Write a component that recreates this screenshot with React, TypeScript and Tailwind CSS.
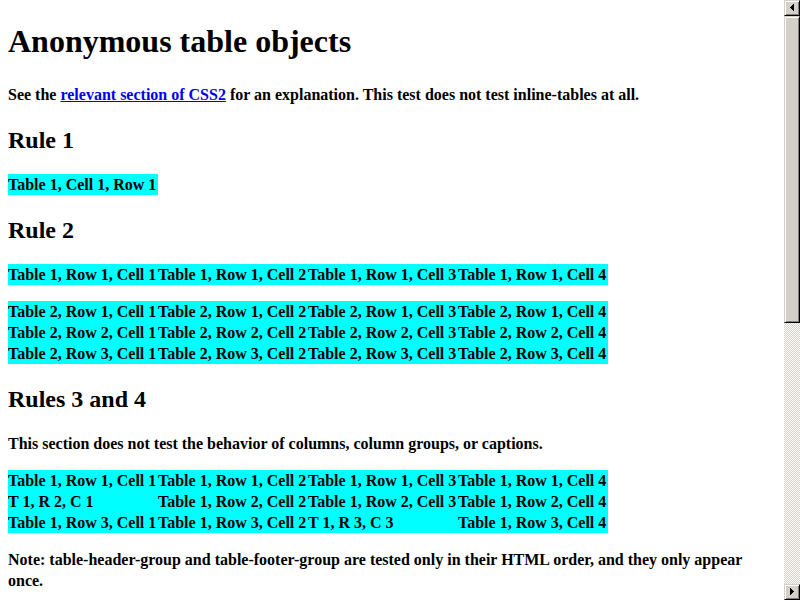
import React from "react";

const COLUMNS = [1, 2, 3, 4];

function fullRow(table: number, row: number): string[] {
  return COLUMNS.map((cell) => `Table ${table}, Row ${row}, Cell ${cell}`);
}

const ruleTwoFirst = [fullRow(1, 1)];
const ruleTwoSecond = [fullRow(2, 1), fullRow(2, 2), fullRow(2, 3)];
const ruleThree = [
  fullRow(1, 1),
  ["T 1, R 2, C 1", ...fullRow(1, 2).slice(1)],
  [...fullRow(1, 3).slice(0, 2), "T 1, R 3, C 3", "Table 1, Row 3, Cell 4"],
];

function DataTable({ rows }: { rows: string[][] }) {
  return (
    <table className="mb-4 border-collapse bg-[#00ffff]">
      <tbody>
        {rows.map((cells, r) => (
          <tr key={r}>
            {cells.map((text, c) => (
              <td key={c} className="w-[150px] p-0 whitespace-nowrap">
                {text}
              </td>
            ))}
          </tr>
        ))}
      </tbody>
    </table>
  );
}

function Heading({ children }: { children: React.ReactNode }) {
  return <h2 className="mt-5 mb-[18px] text-2xl leading-[31px]">{children}</h2>;
}

const raised =
  "border border-t-[#d4d0c8] border-l-[#d4d0c8] border-r-black border-b-black bg-[#d4d0c8] shadow-[inset_1px_1px_0_#ffffff,inset_-1px_-1px_0_#808080]";

function ArrowButton({ label, path }: { label: string; path: string }) {
  return (
    <button type="button" aria-label={label} className={`size-4 shrink-0 ${raised}`}>
      <svg viewBox="0 0 14 14" className="block size-full" shapeRendering="crispEdges">
        <path d={path} fill="#000000" />
      </svg>
    </button>
  );
}

function ScrollBar() {
  return (
    <div className="flex w-4 shrink-0 flex-col bg-[repeating-conic-gradient(#d4d0c8_0_25%,#ffffff_0_50%)] bg-size-[2px_2px]">
      <ArrowButton
        label="Scroll up"
        path="M5 6h1v1h-1zM6 5h1v3h-1zM7 4h1v5h-1zM8 3h1v7h-1z"
      />
      <div className="flex-1">
        <div className={`h-[54%] ${raised}`} />
      </div>
      <ArrowButton
        label="Scroll down"
        path="M5 3h1v7h-1zM6 4h1v5h-1zM7 5h1v3h-1zM8 6h1v1h-1z"
      />
    </div>
  );
}

export default function App() {
  return (
    <div className="flex h-screen overflow-hidden bg-white font-['Liberation_Serif',serif] text-base leading-[21px] font-bold text-black">
      <main className="min-w-0 flex-1 overflow-hidden px-2">
        <h1 className="mt-5 mb-[22px] text-[32px] leading-[42px]">Anonymous table objects</h1>
        <p>
          See the{" "}
          <a href="#tables" className="text-[#0000ee] underline">
            relevant section of CSS2
          </a>{" "}
          for an explanation. This test does not test inline-tables at all.
        </p>
        <Heading>Rule 1</Heading>
        <DataTable rows={[["Table 1, Cell 1, Row 1"]]} />
        <Heading>Rule 2</Heading>
        <DataTable rows={ruleTwoFirst} />
        <DataTable rows={ruleTwoSecond} />
        <Heading>Rules 3 and 4</Heading>
        <p className="mb-4">
          This section does not test the behavior of columns, column groups, or captions.
        </p>
        <DataTable rows={ruleThree} />
        <p>
          Note: table-header-group and table-footer-group are tested only in their HTML order, and
          they only appear once.
        </p>
      </main>
      <ScrollBar />
    </div>
  );
}
